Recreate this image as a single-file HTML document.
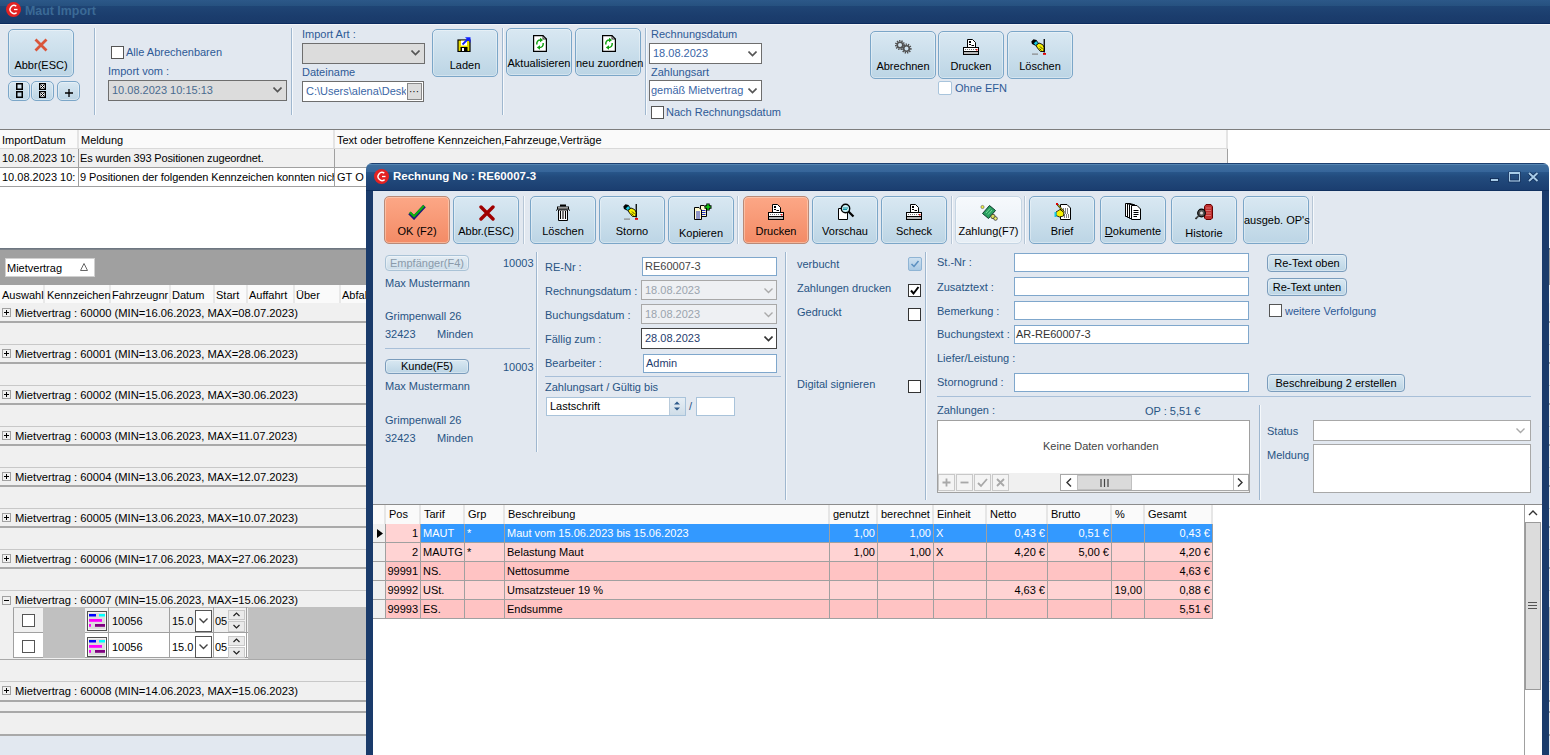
<!DOCTYPE html>
<html><head><meta charset="utf-8">
<style>
*{box-sizing:border-box;margin:0;padding:0}
html,body{width:1550px;height:755px;overflow:hidden;background:#fff}
body{position:relative;font-family:"Liberation Sans",sans-serif;font-size:11px;color:#000}
.a{position:absolute}
.t{position:absolute;white-space:nowrap;line-height:13px}
.tb{background:linear-gradient(#2d5d8f 0%,#24508a 20%,#1b3f72 55%,#17386a 100%)}
.btn{position:absolute;border:1px solid #7ba6c8;border-radius:5px;background:linear-gradient(#d9e8f2,#bcd5e5);text-align:center;box-shadow:inset 0 0 0 1px rgba(255,255,255,0.35)}
.obtn{position:absolute;border:1px solid #b98a78;border-radius:5px;background:linear-gradient(#fca786,#f38b66);text-align:center;box-shadow:inset 0 0 0 1px rgba(255,230,210,0.45)}
.btn span,.obtn span{position:absolute;left:0;right:0;white-space:nowrap}
.lbl{color:#2e5a96}
.dl{color:#285484}
.fld{position:absolute;background:#fff;border:1px solid #7fa7cc}
.cmb{position:absolute;background:#fff;border:1px solid #6e6e6e}
.chk{position:absolute;width:13px;height:13px;border:1px solid #555;background:#fff}
.sep{position:absolute;width:1px;background:#9fb7cf;box-shadow:1px 0 0 #f6f9fc}
.hsep{position:absolute;height:1px;background:#a8bfd8}
</style></head><body>

<!-- MAIN WINDOW -->
<div class="a" style="left:0;top:0;width:1550px;height:24px;background:linear-gradient(#2c5888 0,#26517f 6px,#1f4575 6px,#1b3d6d 16px,#193a6a 23px,#0b2b5e 23px)"></div>
<svg class="a" style="left:6px;top:2px" width="15" height="15" viewBox="0 0 15 15"><circle cx="7.5" cy="7.5" r="7.5" fill="#e42222"/><path d="M10.3 4.2A4 4 0 1 0 10.6 10.6" stroke="#fff" stroke-width="1.4" fill="none"/><path d="M8 7.5H11.5" stroke="#fff" stroke-width="1.3"/></svg>
<div class="t" style="left:25px;top:5px;font-weight:bold;font-size:12.4px;color:#3b6a96">Maut Import</div>

<div class="a" style="left:0;top:24px;width:1550px;height:105px;background:#e2e8f0;border-top:1px solid #f2f5f9"></div>
<div class="a" style="left:0;top:129px;width:1550px;height:1px;background:#7d7d7d"></div>


<!-- toolbar main -->
<div class="btn" style="left:8px;top:29px;width:66px;height:48px">
 <svg class="a" style="left:25px;top:8px" width="14" height="14" viewBox="0 0 14 14"><path d="M1.5 1.5L12.5 12.5M12.5 1.5L1.5 12.5" stroke="#d9553a" stroke-width="2.8"/></svg>
 <span style="top:29px">Abbr(ESC)</span></div>
<div class="btn" style="left:8px;top:81px;width:22px;height:20px;border-radius:5px"><svg class="a" style="left:7px;top:1px" width="8" height="16" viewBox="0 0 8 16"><rect x="0.75" y="0.75" width="5.5" height="5.5" fill="none" stroke="#000" stroke-width="1.5"/><rect x="0.75" y="8.75" width="5.5" height="5.5" fill="none" stroke="#000" stroke-width="1.5"/></svg></div>
<div class="btn" style="left:31px;top:81px;width:23px;height:20px;border-radius:5px"><svg class="a" style="left:7px;top:1px" width="8" height="16" viewBox="0 0 8 16"><rect x="0" y="0" width="7" height="7" fill="#000"/><rect x="1.3" y="1.3" width="4.4" height="4.4" fill="#fff"/><path d="M1.5 1.5L5.5 5.5M5.5 1.5L1.5 5.5" stroke="#000" stroke-width="1"/><rect x="0" y="8" width="7" height="7" fill="#000"/><rect x="1.3" y="9.3" width="4.4" height="4.4" fill="#fff"/><path d="M1.5 9.5L5.5 13.5M5.5 9.5L1.5 13.5" stroke="#000" stroke-width="1"/></svg></div>
<div class="btn" style="left:57px;top:81px;width:23px;height:20px;border-radius:5px"><svg class="a" style="left:7px;top:7px" width="8" height="8"><path d="M4 0V8M0 4H8" stroke="#000" stroke-width="1.3"/></svg></div>
<div class="sep" style="left:94px;top:28px;height:87px"></div>
<div class="chk" style="left:111px;top:46px"></div>
<div class="t lbl" style="left:126px;top:46px">Alle Abrechenbaren</div>
<div class="t lbl" style="left:108px;top:65px">Import vom :</div>
<div class="cmb" style="left:108px;top:80px;width:179px;height:21px;background:#dcdcdc"></div>
<div class="t" style="left:112px;top:84px;color:#4a6b8f">10.08.2023 10:15:13</div>
<svg class="a" style="left:273px;top:87px" width="9" height="6"><path d="M0.5 0.5L4.5 4.5L8.5 0.5" stroke="#555" stroke-width="1.6" fill="none"/></svg>
<div class="sep" style="left:291px;top:28px;height:87px"></div>
<div class="t lbl" style="left:302px;top:28px">Import Art :</div>
<div class="cmb" style="left:302px;top:43px;width:123px;height:21px;background:#dcdcdc"></div>
<svg class="a" style="left:411px;top:50px" width="9" height="6"><path d="M0.5 0.5L4.5 4.5L8.5 0.5" stroke="#555" stroke-width="1.6" fill="none"/></svg>
<div class="t lbl" style="left:302px;top:66px">Dateiname</div>
<div class="cmb" style="left:302px;top:81px;width:122px;height:21px;overflow:hidden"></div>
<div class="t" style="left:306px;top:85px;color:#3a66a6;width:100px;overflow:hidden">C:\Users\alena\Desktop</div>
<div class="a" style="left:407px;top:83px;width:15px;height:17px;background:#dcdcdc;border:1px solid #888"></div>
<div class="t" style="left:409px;top:85px;font-size:10px">···</div>
<div class="btn" style="left:432px;top:29px;width:66px;height:48px">
 <svg class="a" style="left:24px;top:7px" width="15" height="15" viewBox="0 0 15 15"><rect x="1" y="3" width="12" height="11.5" fill="#e6dc00" stroke="#000" stroke-width="1.2"/><rect x="4" y="3.6" width="6" height="5" fill="#fff"/><rect x="3.5" y="10" width="7" height="4.5" fill="#000"/><rect x="5" y="11" width="2" height="3" fill="#fff"/><path d="M5.5 7.5L11 2" stroke="#1020ff" stroke-width="1.8"/><path d="M8 0.3H13.5V5.8Z" fill="#1020ff"/></svg>
 <span style="top:29px">Laden</span></div>
<div class="sep" style="left:502px;top:28px;height:87px"></div>
<div class="btn" style="left:506px;top:28px;width:66px;height:48px">
 <svg class="a" style="left:26px;top:6px" width="14" height="17" viewBox="0 0 14 17"><path d="M0.6 0.6H10L13.4 4V16.4H0.6Z" fill="#fff" stroke="#000" stroke-width="1.2"/><path d="M10 0.6V4H13.4" fill="none" stroke="#000" stroke-width="0.8"/><path d="M3.8 9.5C3.5 6.5 5 5 7.5 5" stroke="#10a010" stroke-width="1.5" fill="none"/><path d="M7 2.8L10.2 5L7 7.2Z" fill="#10a010"/><path d="M10.2 8C10.5 11 9 12.5 6.5 12.5" stroke="#10a010" stroke-width="1.5" fill="none"/><path d="M7 10.3L3.8 12.5L7 14.7Z" fill="#10a010"/></svg>
 <span style="top:28px">Aktualisieren</span></div>
<div class="btn" style="left:575px;top:28px;width:66px;height:48px">
 <svg class="a" style="left:26px;top:6px" width="14" height="17" viewBox="0 0 14 17"><path d="M0.6 0.6H10L13.4 4V16.4H0.6Z" fill="#fff" stroke="#000" stroke-width="1.2"/><path d="M10 0.6V4H13.4" fill="none" stroke="#000" stroke-width="0.8"/><path d="M3.8 9.5C3.5 6.5 5 5 7.5 5" stroke="#10a010" stroke-width="1.5" fill="none"/><path d="M7 2.8L10.2 5L7 7.2Z" fill="#10a010"/><path d="M10.2 8C10.5 11 9 12.5 6.5 12.5" stroke="#10a010" stroke-width="1.5" fill="none"/><path d="M7 10.3L3.8 12.5L7 14.7Z" fill="#10a010"/></svg>
 <span style="top:28px">neu zuordnen</span></div>
<div class="sep" style="left:645px;top:28px;height:87px"></div>
<div class="t lbl" style="left:651px;top:28px">Rechnungsdatum</div>
<div class="cmb" style="left:649px;top:43px;width:113px;height:21px"></div>
<div class="t" style="left:653px;top:47px;color:#3a66a6">18.08.2023</div>
<svg class="a" style="left:748px;top:51px" width="9" height="6"><path d="M0.5 0.5L4.5 4.5L8.5 0.5" stroke="#555" stroke-width="1.6" fill="none"/></svg>
<div class="t lbl" style="left:651px;top:66px">Zahlungsart</div>
<div class="cmb" style="left:649px;top:80px;width:113px;height:21px"></div>
<div class="t" style="left:651px;top:84px;color:#3a66a6">gemäß Mietvertrag</div>
<svg class="a" style="left:748px;top:88px" width="9" height="6"><path d="M0.5 0.5L4.5 4.5L8.5 0.5" stroke="#555" stroke-width="1.6" fill="none"/></svg>
<div class="chk" style="left:651px;top:106px"></div>
<div class="t lbl" style="left:666px;top:106px">Nach Rechnungsdatum</div>

<div class="btn" style="left:870px;top:31px;width:66px;height:48px">
 <svg class="a" style="left:24px;top:8px" width="17" height="14" viewBox="0 0 17 14"><circle cx="5" cy="5" r="4.2" fill="none" stroke="#505050" stroke-width="1.8" stroke-dasharray="1.3 1"/><circle cx="5" cy="5" r="2.8" fill="none" stroke="#505050" stroke-width="1.6"/><circle cx="11.5" cy="8.5" r="4.2" fill="none" stroke="#505050" stroke-width="1.8" stroke-dasharray="1.3 1"/><circle cx="11.5" cy="8.5" r="2.8" fill="none" stroke="#505050" stroke-width="1.6"/></svg>
 <span style="top:28px">Abrechnen</span></div>
<div class="btn" style="left:938px;top:31px;width:66px;height:48px">
 <svg class="a" style="left:24px;top:7px" width="17" height="16" viewBox="0 0 17 16"><path d="M4.5 0.5H9.5L12.5 3.5V8.5H4.5Z" fill="#fff" stroke="#000"/><rect x="6" y="2" width="2" height="2" fill="#000"/><path d="M6 5.5H8M8.5 6.5H11" stroke="#000"/><rect x="0.5" y="8.5" width="15" height="4" fill="#fff" stroke="#000"/><path d="M2 10.5H13" stroke="#777" stroke-dasharray="1 1"/><rect x="13" y="10" width="1.5" height="1.5" fill="#e00"/><rect x="0.5" y="12.5" width="15" height="3" fill="#b8b8b8" stroke="#000"/></svg>
 <span style="top:28px">Drucken</span></div>
<div class="btn" style="left:1007px;top:31px;width:66px;height:48px">
 <svg class="a" style="left:23px;top:7px" width="18" height="16" viewBox="0 0 18 16"><path d="M0.3 2.5L2.5 0.3L5.5 1L7 3.5L4 6.5L1 5Z" fill="#000"/><path d="M2.5 4.3L5.2 1.8L7.5 4.2L4.8 6.8Z" fill="#18c8e0" stroke="#000" stroke-width="0.6"/><path d="M5 6.5L8 4L11.5 5.5L13.5 8.5L13 12.5L9.5 12.5L6.5 9Z" fill="#f6f000" stroke="#000" stroke-width="0.9"/><path d="M9 7.5L11.5 10M8.5 9.5L10.5 11.5" stroke="#000" stroke-width="0.7"/><rect x="12.6" y="0" width="1.3" height="13.5" fill="#000"/><rect x="1" y="14.5" width="6" height="1.2" fill="#888"/><rect x="12" y="14" width="3" height="1.8" fill="#e00000"/></svg>
 <span style="top:28px">Löschen</span></div>
<div class="chk" style="left:938px;top:81px;width:14px;height:14px;border-color:#a8c4dc;border-radius:2px"></div>
<div class="t lbl" style="left:955px;top:82px">Ohne EFN</div>


<!-- top grid -->
<div class="a" style="left:0;top:130px;width:1228px;height:19px;background:#fafafa;border-bottom:1px solid #d9d9d9"></div>
<div class="a" style="left:0;top:149px;width:1228px;height:19px;background:#f0f0f0;border-bottom:1px solid #a0a0a0"></div>
<div class="a" style="left:0;top:168px;width:1228px;height:19px;background:#fff;border-bottom:1px solid #a0a0a0"></div>
<div class="a" style="left:77px;top:130px;width:2px;height:18px;background:#e4e4e4"></div><div class="a" style="left:78px;top:149px;width:1px;height:38px;background:#a0a0a0"></div>
<div class="a" style="left:333px;top:130px;width:2px;height:18px;background:#e4e4e4"></div><div class="a" style="left:334px;top:149px;width:1px;height:38px;background:#a0a0a0"></div>
<div class="a" style="left:1226px;top:130px;width:2px;height:18px;background:#e4e4e4"></div><div class="a" style="left:1227px;top:149px;width:1px;height:38px;background:#a0a0a0"></div>
<div class="t" style="left:2px;top:134px">ImportDatum</div>
<div class="t" style="left:81px;top:134px">Meldung</div>
<div class="t" style="left:337px;top:134px">Text oder betroffene Kennzeichen,Fahrzeuge,Verträge</div>
<div class="t" style="left:2px;top:152px">10.08.2023 10:</div>
<div class="t" style="left:80px;top:152px;letter-spacing:-0.15px">Es wurden 393 Positionen zugeordnet.</div>
<div class="t" style="left:2px;top:171px">10.08.2023 10:</div>
<div class="t" style="left:80px;top:171px;width:254px;overflow:hidden;letter-spacing:-0.1px">9 Positionen der folgenden Kennzeichen konnten nicht</div>
<div class="t" style="left:337px;top:171px">GT O 6</div>

<!-- group panel -->
<div class="a" style="left:0;top:248px;width:1550px;height:2px;background:linear-gradient(#66707c,#858a90)"></div>
<div class="a" style="left:0;top:250px;width:1550px;height:35px;background:#a0a0a0"></div>
<div class="a" style="left:5px;top:258px;width:90px;height:19px;background:#fff;border:1px solid #d0d0d0"></div>
<div class="t" style="left:7px;top:262px">Mietvertrag</div>
<svg class="a" style="left:80px;top:263px" width="8" height="8"><path d="M4 0.5L7.5 7.5H0.5Z" fill="none" stroke="#666"/></svg>
<div class="a" style="left:0;top:285px;width:1550px;height:470px;background:#f0f0f0"></div>
<div class="a" style="left:0;top:285px;width:1550px;height:18px;background:#fafafa"></div>
<div class="a" style="left:43px;top:285px;width:2px;height:18px;background:#e8e8e8"></div><div class="t" style="left:2px;top:289px">Auswahl</div>
<div class="a" style="left:109px;top:285px;width:2px;height:18px;background:#e8e8e8"></div><div class="t" style="left:47px;top:289px">Kennzeichen</div>
<div class="a" style="left:169px;top:285px;width:2px;height:18px;background:#e8e8e8"></div><div class="t" style="left:112px;top:289px">Fahrzeugnr</div>
<div class="a" style="left:213px;top:285px;width:2px;height:18px;background:#e8e8e8"></div><div class="t" style="left:172px;top:289px">Datum</div>
<div class="a" style="left:246px;top:285px;width:2px;height:18px;background:#e8e8e8"></div><div class="t" style="left:216px;top:289px">Start</div>
<div class="a" style="left:293px;top:285px;width:2px;height:18px;background:#e8e8e8"></div><div class="t" style="left:249px;top:289px">Auffahrt</div>
<div class="a" style="left:339px;top:285px;width:2px;height:18px;background:#e8e8e8"></div><div class="t" style="left:296px;top:289px">Über</div>
<div class="a" style="left:400px;top:285px;width:2px;height:18px;background:#e8e8e8"></div><div class="t" style="left:342px;top:289px">Abfahrt</div>
<div class="a" style="left:0;top:321px;width:1550px;height:2px;background:#a9a9a9"></div><div class="a" style="left:0;top:344px;width:1550px;height:1px;background:#c8c8c8"></div><div class="a" style="left:2px;top:308px;width:9px;height:9px;border:1px solid #a0a0a0;background:#f0f0f0"></div><div class="a" style="left:4px;top:312px;width:5px;height:1px;background:#000"></div><div class="a" style="left:6px;top:310px;width:1px;height:5px;background:#000"></div><div class="t" style="left:15px;top:307px;font-size:11.2px">Mietvertrag : 60000 (MIN=16.06.2023, MAX=08.07.2023)</div>
<div class="a" style="left:0;top:362px;width:1550px;height:2px;background:#a9a9a9"></div><div class="a" style="left:0;top:385px;width:1550px;height:1px;background:#c8c8c8"></div><div class="a" style="left:2px;top:349px;width:9px;height:9px;border:1px solid #a0a0a0;background:#f0f0f0"></div><div class="a" style="left:4px;top:353px;width:5px;height:1px;background:#000"></div><div class="a" style="left:6px;top:351px;width:1px;height:5px;background:#000"></div><div class="t" style="left:15px;top:348px;font-size:11.2px">Mietvertrag : 60001 (MIN=13.06.2023, MAX=28.06.2023)</div>
<div class="a" style="left:0;top:403px;width:1550px;height:2px;background:#a9a9a9"></div><div class="a" style="left:0;top:426px;width:1550px;height:1px;background:#c8c8c8"></div><div class="a" style="left:2px;top:390px;width:9px;height:9px;border:1px solid #a0a0a0;background:#f0f0f0"></div><div class="a" style="left:4px;top:394px;width:5px;height:1px;background:#000"></div><div class="a" style="left:6px;top:392px;width:1px;height:5px;background:#000"></div><div class="t" style="left:15px;top:389px;font-size:11.2px">Mietvertrag : 60002 (MIN=15.06.2023, MAX=30.06.2023)</div>
<div class="a" style="left:0;top:444px;width:1550px;height:2px;background:#a9a9a9"></div><div class="a" style="left:0;top:467px;width:1550px;height:1px;background:#c8c8c8"></div><div class="a" style="left:2px;top:431px;width:9px;height:9px;border:1px solid #a0a0a0;background:#f0f0f0"></div><div class="a" style="left:4px;top:435px;width:5px;height:1px;background:#000"></div><div class="a" style="left:6px;top:433px;width:1px;height:5px;background:#000"></div><div class="t" style="left:15px;top:430px;font-size:11.2px">Mietvertrag : 60003 (MIN=13.06.2023, MAX=11.07.2023)</div>
<div class="a" style="left:0;top:485px;width:1550px;height:2px;background:#a9a9a9"></div><div class="a" style="left:0;top:508px;width:1550px;height:1px;background:#c8c8c8"></div><div class="a" style="left:2px;top:472px;width:9px;height:9px;border:1px solid #a0a0a0;background:#f0f0f0"></div><div class="a" style="left:4px;top:476px;width:5px;height:1px;background:#000"></div><div class="a" style="left:6px;top:474px;width:1px;height:5px;background:#000"></div><div class="t" style="left:15px;top:471px;font-size:11.2px">Mietvertrag : 60004 (MIN=13.06.2023, MAX=12.07.2023)</div>
<div class="a" style="left:0;top:526px;width:1550px;height:2px;background:#a9a9a9"></div><div class="a" style="left:0;top:549px;width:1550px;height:1px;background:#c8c8c8"></div><div class="a" style="left:2px;top:513px;width:9px;height:9px;border:1px solid #a0a0a0;background:#f0f0f0"></div><div class="a" style="left:4px;top:517px;width:5px;height:1px;background:#000"></div><div class="a" style="left:6px;top:515px;width:1px;height:5px;background:#000"></div><div class="t" style="left:15px;top:512px;font-size:11.2px">Mietvertrag : 60005 (MIN=13.06.2023, MAX=10.07.2023)</div>
<div class="a" style="left:0;top:567px;width:1550px;height:2px;background:#a9a9a9"></div><div class="a" style="left:0;top:590px;width:1550px;height:1px;background:#c8c8c8"></div><div class="a" style="left:2px;top:554px;width:9px;height:9px;border:1px solid #a0a0a0;background:#f0f0f0"></div><div class="a" style="left:4px;top:558px;width:5px;height:1px;background:#000"></div><div class="a" style="left:6px;top:556px;width:1px;height:5px;background:#000"></div><div class="t" style="left:15px;top:553px;font-size:11.2px">Mietvertrag : 60006 (MIN=17.06.2023, MAX=27.06.2023)</div>

<div class="a" style="left:0;top:591px;width:1550px;height:16px"></div>
<div class="a" style="left:2px;top:596px;width:9px;height:9px;border:1px solid #a0a0a0;background:#f0f0f0"></div><div class="a" style="left:4px;top:600px;width:5px;height:1px;background:#000"></div>
<div class="t" style="left:15px;top:594px;font-size:11.2px">Mietvertrag : 60007 (MIN=15.06.2023, MAX=15.06.2023)</div>
<div class="a" style="left:248px;top:607px;width:1302px;height:52px;background:#c0c0c0"></div>
<div class="a" style="left:13px;top:607px;width:1px;height:51px;background:#a0a0a0"></div>
<div class="a" style="left:13px;top:607px;width:235px;height:1px;background:#b8b8b8"></div>

<div class="a" style="left:14px;top:608px;width:234px;height:25px;background:#f0f0f0;border-bottom:1px solid #a0a0a0"></div>
<div class="chk" style="left:22px;top:614px;width:13px;height:13px;border-color:#555"></div>
<div class="a" style="left:43px;top:607px;width:42px;height:26px;background:#c0c0c0"></div>
<div class="a" style="left:108px;top:607px;width:1px;height:26px;background:#a0a0a0"></div>
<div class="a" style="left:169px;top:607px;width:1px;height:26px;background:#a0a0a0"></div>
<div class="a" style="left:213px;top:607px;width:1px;height:26px;background:#a0a0a0"></div>
<div class="a" style="left:246px;top:607px;width:1px;height:26px;background:#a0a0a0"></div>
<svg class="a" style="left:87px;top:611px" width="20" height="20" viewBox="0 0 20 20"><rect x="0.5" y="0.5" width="19" height="19" fill="#dcdcdc" stroke="#505050"/><rect x="1.5" y="1.5" width="17" height="17" fill="none" stroke="#f4f4f4"/><rect x="2" y="3" width="7" height="2.5" fill="#0000ff"/><rect x="12" y="3" width="6" height="2.5" fill="#00ffff"/><rect x="2" y="8" width="13" height="2.8" fill="#ff00ff"/><rect x="2" y="13" width="2" height="2.8" fill="#ff00ff"/><rect x="8" y="13" width="10" height="2.8" fill="#800080"/></svg>
<div class="t" style="left:112px;top:615px">10056</div>
<div class="t" style="left:172px;top:615px">15.0</div>
<div class="a" style="left:195px;top:610px;width:17px;height:22px;background:#fff;border:1px solid #555"></div>
<svg class="a" style="left:199px;top:618px" width="9" height="6"><path d="M0.5 0.5L4.5 4.5L8.5 0.5" stroke="#444" stroke-width="1.4" fill="none"/></svg>
<div class="t" style="left:215px;top:615px">05</div>
<div class="a" style="left:228px;top:610px;width:17px;height:10px;background:#eaeaea;border:1px solid #c8c8c8"></div>
<div class="a" style="left:228px;top:621px;width:17px;height:11px;background:#eaeaea;border:1px solid #c8c8c8"></div>
<svg class="a" style="left:233px;top:612px" width="7" height="5"><path d="M0.5 4L3.5 1L6.5 4" stroke="#222" stroke-width="1.2" fill="none"/></svg>
<svg class="a" style="left:233px;top:624px" width="7" height="5"><path d="M0.5 1L3.5 4L6.5 1" stroke="#222" stroke-width="1.2" fill="none"/></svg>

<div class="a" style="left:14px;top:633px;width:234px;height:25px;background:#fff;border-bottom:1px solid #a0a0a0"></div>
<div class="chk" style="left:22px;top:640px;width:13px;height:13px;border-color:#555"></div>
<div class="a" style="left:43px;top:633px;width:42px;height:25px;background:#c0c0c0"></div>
<div class="a" style="left:108px;top:633px;width:1px;height:25px;background:#a0a0a0"></div>
<div class="a" style="left:169px;top:633px;width:1px;height:25px;background:#a0a0a0"></div>
<div class="a" style="left:213px;top:633px;width:1px;height:25px;background:#a0a0a0"></div>
<div class="a" style="left:246px;top:633px;width:1px;height:25px;background:#a0a0a0"></div>
<svg class="a" style="left:87px;top:637px" width="20" height="20" viewBox="0 0 20 20"><rect x="0.5" y="0.5" width="19" height="19" fill="#dcdcdc" stroke="#505050"/><rect x="1.5" y="1.5" width="17" height="17" fill="none" stroke="#f4f4f4"/><rect x="2" y="3" width="7" height="2.5" fill="#0000ff"/><rect x="12" y="3" width="6" height="2.5" fill="#00ffff"/><rect x="2" y="8" width="13" height="2.8" fill="#ff00ff"/><rect x="2" y="13" width="2" height="2.8" fill="#ff00ff"/><rect x="8" y="13" width="10" height="2.8" fill="#800080"/></svg>
<div class="t" style="left:112px;top:641px">10056</div>
<div class="t" style="left:172px;top:641px">15.0</div>
<div class="a" style="left:195px;top:636px;width:17px;height:22px;background:#fff;border:1px solid #555"></div>
<svg class="a" style="left:199px;top:644px" width="9" height="6"><path d="M0.5 0.5L4.5 4.5L8.5 0.5" stroke="#444" stroke-width="1.4" fill="none"/></svg>
<div class="t" style="left:215px;top:641px">05</div>
<div class="a" style="left:228px;top:636px;width:17px;height:10px;background:#eaeaea;border:1px solid #c8c8c8"></div>
<div class="a" style="left:228px;top:647px;width:17px;height:11px;background:#eaeaea;border:1px solid #c8c8c8"></div>
<svg class="a" style="left:233px;top:638px" width="7" height="5"><path d="M0.5 4L3.5 1L6.5 4" stroke="#222" stroke-width="1.2" fill="none"/></svg>
<svg class="a" style="left:233px;top:650px" width="7" height="5"><path d="M0.5 1L3.5 4L6.5 1" stroke="#222" stroke-width="1.2" fill="none"/></svg>
<div class="a" style="left:0;top:659px;width:1550px;height:1px;background:#a9a9a9"></div>
<div class="a" style="left:0;top:681px;width:1550px;height:1px;background:#c8c8c8"></div>
<div class="a" style="left:2px;top:686px;width:9px;height:9px;border:1px solid #a0a0a0;background:#f0f0f0"></div><div class="a" style="left:4px;top:690px;width:5px;height:1px;background:#000"></div><div class="a" style="left:6px;top:688px;width:1px;height:5px;background:#000"></div>
<div class="t" style="left:15px;top:685px;font-size:11.2px">Mietvertrag : 60008 (MIN=14.06.2023, MAX=15.06.2023)</div>
<div class="a" style="left:0;top:700px;width:1550px;height:2px;background:#a9a9a9"></div>
<div class="a" style="left:0;top:711px;width:1550px;height:2px;background:#a9a9a9"></div>
<div class="a" style="left:0;top:734px;width:1550px;height:2px;background:#a9a9a9"></div>
<div class="a" style="left:0;top:736px;width:1550px;height:19px;background:#e2e8f0"></div>


<!-- DIALOG -->
<div class="a tb" style="left:366px;top:163px;width:1183px;height:592px;border-radius:6px 6px 0 0;background:linear-gradient(#1d4070 0,#1d4070 1px,#5b8bb8 1px,#4f7fad 2px,#3d6c9c 2px,#36659a 9px,#28568a 9px,#224b7d 14px,#1b3e70 27px,#10305f 27px,#10305f 28px,#1a3b6b 28px)"></div>
<div class="a" style="left:373px;top:191px;width:1169px;height:564px;background:#e2e8f0"></div>
<svg class="a" style="left:374px;top:169px" width="15" height="15" viewBox="0 0 15 15"><circle cx="7.5" cy="7.5" r="7.5" fill="#e42222"/><path d="M10.3 4.2A4 4 0 1 0 10.6 10.6" stroke="#fff" stroke-width="1.4" fill="none"/><path d="M8 7.5H11.5" stroke="#fff" stroke-width="1.3"/></svg>
<div class="t" style="left:393px;top:170px;color:#fff;font-weight:bold;font-size:11.5px">Rechnung No : RE60007-3</div>
<svg class="a" style="left:1488px;top:168px" width="54" height="16" viewBox="0 0 54 16"><rect x="2.5" y="10.5" width="8" height="3" fill="#a8cce8" stroke="#0e2a55" stroke-width="0.9"/><rect x="21.5" y="5" width="10" height="8" fill="none" stroke="#0e2a55" stroke-width="2.6"/><rect x="21.5" y="5" width="10" height="8" fill="none" stroke="#a8cce8" stroke-width="1.2"/><rect x="21" y="4" width="11" height="2" fill="#a8cce8"/><path d="M41 5L49.5 13M49.5 5L41 13" stroke="#0e2a55" stroke-width="3.4"/><path d="M41 5L49.5 13M49.5 5L41 13" stroke="#a8cce8" stroke-width="2"/></svg>
<div class="obtn" style="left:384px;top:196px;width:66px;height:48px"><svg class="a" style="left:23px;top:7px" width="18" height="16" viewBox="0 0 18 16"><path d="M1.5 9L6 13.5L16.5 2" stroke="#1b1b7a" stroke-width="3.6" fill="none"/><path d="M1.8 8.3L6 12.3L16 1.8" stroke="#0cb00c" stroke-width="2.2" fill="none"/></svg><span style="top:28px">OK (F2)</span></div>
<div class="btn" style="left:453px;top:196px;width:66px;height:48px"><svg class="a" style="left:25px;top:8px" width="16" height="16" viewBox="0 0 16 16"><path d="M2 2L14 14M14 2L2 14" stroke="#a00000" stroke-width="3.4" stroke-linecap="round"/></svg><span style="top:28px">Abbr.(ESC)</span></div>
<div class="sep" style="left:523px;top:196px;height:48px;background:#b7c6d6"></div><div class="btn" style="left:530px;top:196px;width:66px;height:48px"><svg class="a" style="left:25px;top:7px" width="14" height="17" viewBox="0 0 14 17"><rect x="4" y="0.5" width="6" height="2" fill="#000"/><rect x="1" y="2.5" width="12" height="3" fill="#000"/><rect x="2" y="3.3" width="10" height="1.2" fill="#ddd"/><path d="M2.5 6H11.5V16.5H2.5Z" fill="#fff" stroke="#000"/><path d="M4.5 7V15M7 7V15M9.5 7V15" stroke="#000" stroke-width="1.1"/><path d="M0 6.5L1.5 5.5M14 6.5L12.5 5.5" stroke="#000"/></svg><span style="top:28px">Löschen</span></div>
<div class="btn" style="left:599px;top:196px;width:66px;height:48px"><svg class="a" style="left:23px;top:7px" width="18" height="16" viewBox="0 0 18 16"><path d="M0.3 2.5L2.5 0.3L5.5 1L7 3.5L4 6.5L1 5Z" fill="#000"/><path d="M2.5 4.3L5.2 1.8L7.5 4.2L4.8 6.8Z" fill="#18c8e0" stroke="#000" stroke-width="0.6"/><path d="M5 6.5L8 4L11.5 5.5L13.5 8.5L13 12.5L9.5 12.5L6.5 9Z" fill="#f6f000" stroke="#000" stroke-width="0.9"/><path d="M9 7.5L11.5 10M8.5 9.5L10.5 11.5" stroke="#000" stroke-width="0.7"/><rect x="12.6" y="0" width="1.3" height="13.5" fill="#000"/><rect x="1" y="14.5" width="6" height="1.2" fill="#888"/><rect x="12" y="14" width="3" height="1.8" fill="#e00000"/></svg><span style="top:28px">Storno</span></div>
<div class="btn" style="left:668px;top:196px;width:66px;height:48px"><svg class="a" style="left:24px;top:6px" width="19" height="17" viewBox="0 0 19 17"><path d="M7.5 2.5H11L13.5 5V13.5H7.5Z" fill="#fffbd0" stroke="#000"/><path d="M1.5 4.5H6L8.5 7V16.5H1.5Z" fill="#fffbd0" stroke="#000"/><path d="M3 9H7M3 11H7M3 13H7M3 15H7M9 7.5H12.5M9 9.5H12.5M9 11.5H12.5" stroke="#2030c0"/><path d="M15 0.5V7.5M11.5 4H18.5" stroke="#000" stroke-width="3.4"/><path d="M15 1.3V6.7M12.3 4H17.7" stroke="#10d010" stroke-width="1.6"/></svg><span style="top:30px">Kopieren</span></div>
<div class="sep" style="left:737px;top:196px;height:48px;background:#b7c6d6"></div><div class="obtn" style="left:743px;top:196px;width:66px;height:48px"><svg class="a" style="left:24px;top:7px" width="17" height="16" viewBox="0 0 17 16"><path d="M4.5 0.5H9.5L12.5 3.5V8.5H4.5Z" fill="#fff" stroke="#000"/><rect x="6" y="2" width="2" height="2" fill="#000"/><path d="M6 5.5H8M8.5 6.5H11" stroke="#000"/><rect x="0.5" y="8.5" width="15" height="4" fill="#fff" stroke="#000"/><path d="M2 10.5H13" stroke="#777" stroke-dasharray="1 1"/><rect x="13" y="10" width="1.5" height="1.5" fill="#e00"/><rect x="0.5" y="12.5" width="15" height="3" fill="#b8b8b8" stroke="#000"/></svg><span style="top:28px">Drucken</span></div>
<div class="btn" style="left:812px;top:196px;width:66px;height:48px"><svg class="a" style="left:25px;top:6px" width="17" height="17" viewBox="0 0 17 17"><path d="M0.5 5.5H7.5L9.5 7.5V16.5H0.5Z" fill="#fff" stroke="#000"/><circle cx="7.5" cy="5.5" r="4.2" fill="#c8eef4" stroke="#000" stroke-width="1.4"/><path d="M5 5H10M5 6.5H9" stroke="#1090a0"/><path d="M10.5 8.5L15.5 13.5" stroke="#000" stroke-width="2.2"/></svg><span style="top:28px">Vorschau</span></div>
<div class="btn" style="left:881px;top:196px;width:66px;height:48px"><svg class="a" style="left:24px;top:7px" width="17" height="16" viewBox="0 0 17 16"><path d="M4.5 0.5H9.5L12.5 3.5V8.5H4.5Z" fill="#fff" stroke="#000"/><rect x="6" y="2" width="2" height="2" fill="#000"/><path d="M6 5.5H8M8.5 6.5H11" stroke="#000"/><rect x="0.5" y="8.5" width="15" height="4" fill="#fff" stroke="#000"/><path d="M2 10.5H13" stroke="#777" stroke-dasharray="1 1"/><rect x="13" y="10" width="1.5" height="1.5" fill="#e00"/><rect x="0.5" y="12.5" width="15" height="3" fill="#b8b8b8" stroke="#000"/></svg><span style="top:28px">Scheck</span></div>
<div class="sep" style="left:951px;top:196px;height:48px;background:#b7c6d6"></div><div class="btn" style="left:955px;top:196px;width:67px;height:48px;background:linear-gradient(#f6f9fc,#e6eef5);border-color:#c6d6e4"><svg class="a" style="left:24px;top:7px" width="18" height="17" viewBox="0 0 18 17"><path d="M2.5 9.5L9.5 1.5L15.5 6.5L8.5 14.5Z" fill="#2aa060" stroke="#0b3a2a" stroke-width="1"/><path d="M6 9L10 4.5M8 10.5L12 6" stroke="#7fe0a0" stroke-width="0.9"/><circle cx="13" cy="12.5" r="2.2" fill="#d8e060" stroke="#333" stroke-width="0.8"/><circle cx="15.5" cy="14.5" r="1.8" fill="#f0f070" stroke="#333" stroke-width="0.8"/><circle cx="2.5" cy="3" r="1.6" fill="#f0f040" stroke="#555" stroke-width="0.6"/></svg><span style="top:28px">Zahlung(F7)</span></div><div class="sep" style="left:1024px;top:196px;height:48px;background:#b7c6d6"></div><div class="btn" style="left:1029px;top:196px;width:66px;height:48px"><svg class="a" style="left:24px;top:6px" width="18" height="17" viewBox="0 0 18 17"><path d="M6.5 1.5H13L16.5 5V16.5H6.5Z" fill="#fff" stroke="#000"/><path d="M9 6H15M9 8H15M9 10H15M10 12H15M10 14H15" stroke="#000" stroke-dasharray="1 1"/><path d="M2 9L6 6.5L10 9L9.5 13L5.5 14L2 12.5Z" fill="#f6f000" stroke="#000" stroke-width="0.8"/><rect x="0.5" y="9" width="2" height="5" fill="#18c8e0"/><path d="M3 1L10 9" stroke="#000" stroke-width="1.8"/><path d="M3.3 1.3L9.7 8.7" stroke="#f0e000" stroke-width="0.9"/><rect x="2" y="0" width="2" height="2" fill="#d00"/></svg><span style="top:28px">Brief</span></div>
<div class="btn" style="left:1100px;top:196px;width:66px;height:48px"><svg class="a" style="left:24px;top:6px" width="18" height="17" viewBox="0 0 18 17"><path d="M0.5 0.5H5.5V13.5H0.5Z" fill="#fff" stroke="#000"/><path d="M2.5 1H7.5V14.5H2.5Z" fill="#fff" stroke="#000"/><path d="M4.5 1.5H9.5V15.5H4.5Z" fill="#fff" stroke="#000"/><path d="M6.5 2.5H12L15.5 6V16.5H6.5Z" fill="#fff" stroke="#000"/><path d="M8.5 7.5H13.5M8.5 9.5H13.5M8.5 11.5H13.5M8.5 13.5H12" stroke="#000"/></svg><span style="top:28px"><u>D</u>okumente</span></div>
<div class="btn" style="left:1171px;top:196px;width:66px;height:48px"><svg class="a" style="left:23px;top:6px" width="19" height="17" viewBox="0 0 19 17"><path d="M9.5 3.5L11 1.5H16L17.5 3.5V15L16 16.5H11L9.5 15Z" fill="#c03030" stroke="#600" stroke-width="1"/><path d="M11.5 5H16M11.5 7.5H16M11.5 10H16M11.5 12.5H16" stroke="#f0b0b0" stroke-dasharray="1 1"/><circle cx="6.5" cy="10" r="3.8" fill="#555" stroke="#000" stroke-width="1.2"/><circle cx="6.5" cy="10" r="1.5" fill="#ddd"/><path d="M4.5 12L0.5 16" stroke="#000" stroke-width="1.6"/><path d="M4.2 12.3L1 15.5" stroke="#fff" stroke-width="0.5"/></svg><span style="top:30px">Historie</span></div>
<div class="btn" style="left:1243px;top:196px;width:66px;height:48px"><span style="top:17px">ausgeb. OP's</span></div><div class="sep" style="left:1312px;top:196px;height:48px;background:#b7c6d6"></div>

<!-- dialog body left -->
<div class="btn" style="left:385px;top:255px;width:84px;height:16px;border-radius:4px;background:linear-gradient(#e4edf4,#cddde9);border-color:#a9c2d6"><span style="top:1px;color:#8a9aaa">Empfänger(F4)</span></div>
<div class="t dl" style="left:503px;top:257px">10003</div>
<div class="t dl" style="left:385px;top:277px">Max Mustermann</div>
<div class="t dl" style="left:385px;top:310px">Grimpenwall 26</div>
<div class="t dl" style="left:385px;top:328px">32423</div>
<div class="t dl" style="left:437px;top:328px">Minden</div>
<div class="hsep" style="left:385px;top:348px;width:145px"></div>
<div class="btn" style="left:385px;top:359px;width:84px;height:15px;border-radius:4px;border-color:#7a9cbc"><span style="top:0px">Kunde(F5)</span></div>
<div class="t dl" style="left:503px;top:361px">10003</div>
<div class="t dl" style="left:385px;top:380px">Max Mustermann</div>
<div class="t dl" style="left:385px;top:414px">Grimpenwall 26</div>
<div class="t dl" style="left:385px;top:432px">32423</div>
<div class="t dl" style="left:437px;top:432px">Minden</div>
<div class="sep" style="left:536px;top:252px;height:200px"></div>

<!-- middle fields -->
<div class="t dl" style="left:545px;top:261px">RE-Nr :</div>
<div class="fld" style="left:642px;top:257px;width:135px;height:19px"></div>
<div class="t" style="left:645px;top:260px;color:#444">RE60007-3</div>
<div class="t dl" style="left:545px;top:285px">Rechnungsdatum :</div>
<div class="fld" style="left:641px;top:280px;width:136px;height:20px;border-color:#a8a8a8;background:#eef0f3"></div>
<div class="t" style="left:645px;top:284px;color:#9aa4ae">18.08.2023</div>
<svg class="a" style="left:764px;top:288px" width="9" height="6"><path d="M0.5 0.5L4.5 4.5L8.5 0.5" stroke="#aaa" stroke-width="1.4" fill="none"/></svg>
<div class="t dl" style="left:545px;top:309px">Buchungsdatum :</div>
<div class="fld" style="left:641px;top:304px;width:136px;height:20px;border-color:#a8a8a8;background:#eef0f3"></div>
<div class="t" style="left:645px;top:308px;color:#9aa4ae">18.08.2023</div>
<svg class="a" style="left:764px;top:312px" width="9" height="6"><path d="M0.5 0.5L4.5 4.5L8.5 0.5" stroke="#aaa" stroke-width="1.4" fill="none"/></svg>
<div class="t dl" style="left:545px;top:333px">Fällig zum :</div>
<div class="fld" style="left:641px;top:328px;width:136px;height:21px;border-color:#444;background:#fff"></div>
<div class="t" style="left:645px;top:332px;color:#1f3d6e">28.08.2023</div>
<svg class="a" style="left:764px;top:336px" width="9" height="6"><path d="M0.5 0.5L4.5 4.5L8.5 0.5" stroke="#333" stroke-width="1.6" fill="none"/></svg>
<div class="t dl" style="left:545px;top:357px">Bearbeiter :</div>
<div class="fld" style="left:643px;top:354px;width:134px;height:19px"></div>
<div class="t" style="left:646px;top:357px;color:#1f3d6e">Admin</div>
<div class="hsep" style="left:545px;top:376px;width:236px"></div>
<div class="t dl" style="left:545px;top:381px">Zahlungsart / Gültig bis</div>
<div class="fld" style="left:546px;top:397px;width:140px;height:19px;border-color:#a9c3da"></div>
<div class="t" style="left:550px;top:400px">Lastschrift</div>
<div class="a" style="left:669px;top:398px;width:16px;height:17px;background:linear-gradient(#e6eef5,#cfdde8);border-left:1px solid #b9cbdb"></div>
<svg class="a" style="left:673px;top:400px" width="8" height="12"><path d="M1 4.5L4 1.5L7 4.5Z M1 7.5L4 10.5L7 7.5Z" fill="#2e5a8a"/></svg>
<div class="t dl" style="left:689px;top:400px">/</div>
<div class="fld" style="left:696px;top:397px;width:39px;height:19px;border-color:#a9c3da"></div>
<div class="sep" style="left:785px;top:252px;height:248px"></div>

<!-- checkboxes -->
<div class="t dl" style="left:797px;top:258px">verbucht</div>
<div class="a" style="left:908px;top:257px;width:14px;height:14px;border:1px solid #8fb4d4;border-radius:2px;background:linear-gradient(#cde0f0,#a9c9e4)"></div>
<svg class="a" style="left:910px;top:259px" width="10" height="10"><path d="M1.5 5L4 7.5L8.5 2" stroke="#5a8fc0" stroke-width="1.5" fill="none"/></svg>
<div class="t dl" style="left:797px;top:282px">Zahlungen drucken</div>
<div class="chk" style="left:908px;top:284px;width:13px;height:13px;border-color:#333"></div>
<svg class="a" style="left:909px;top:285px" width="11" height="11"><path d="M2 5.5L4.5 8.5L9.5 2" stroke="#000" stroke-width="2" fill="none"/></svg>
<div class="t dl" style="left:797px;top:306px">Gedruckt</div>
<div class="chk" style="left:908px;top:308px;width:13px;height:13px;border-color:#333"></div>
<div class="t dl" style="left:797px;top:378px">Digital signieren</div>
<div class="chk" style="left:908px;top:380px;width:13px;height:13px;border-color:#333"></div>
<div class="sep" style="left:925px;top:252px;height:248px"></div>

<!-- right fields -->
<div class="t dl" style="left:937px;top:256px">St.-Nr :</div>
<div class="fld" style="left:1014px;top:253px;width:235px;height:19px"></div>
<div class="t dl" style="left:937px;top:281px">Zusatztext :</div>
<div class="fld" style="left:1014px;top:277px;width:235px;height:19px"></div>
<div class="t dl" style="left:937px;top:305px">Bemerkung :</div>
<div class="fld" style="left:1014px;top:301px;width:235px;height:19px"></div>
<div class="t dl" style="left:937px;top:328px">Buchungstext :</div>
<div class="fld" style="left:1014px;top:325px;width:235px;height:19px"></div>
<div class="t" style="left:1016px;top:328px;color:#333">AR-RE60007-3</div>
<div class="t dl" style="left:937px;top:352px">Liefer/Leistung :</div>
<div class="t dl" style="left:937px;top:376px">Stornogrund :</div>
<div class="fld" style="left:1014px;top:373px;width:235px;height:19px"></div>

<div class="btn" style="left:1267px;top:254px;width:80px;height:18px;border-radius:4px;border-color:#7a9cbc"><span style="top:2px">Re-Text oben</span></div>
<div class="btn" style="left:1267px;top:278px;width:80px;height:18px;border-radius:4px;border-color:#7a9cbc"><span style="top:2px">Re-Text unten</span></div>
<div class="chk" style="left:1269px;top:304px;width:13px;height:13px;border-color:#555"></div>
<div class="t" style="left:1285px;top:305px;color:#2e5a96">weitere Verfolgung</div>
<div class="btn" style="left:1267px;top:374px;width:138px;height:18px;border-radius:4px;border-color:#7a9cbc"><span style="top:2px">Beschreibung 2 erstellen</span></div>

<div class="hsep" style="left:937px;top:396px;width:594px"></div>
<div class="t dl" style="left:937px;top:404px">Zahlungen :</div>
<div class="t dl" style="left:1145px;top:405px">OP : 5,51 €</div>
<div class="a" style="left:937px;top:420px;width:313px;height:73px;background:#fff;border:1px solid #a0a0a0"></div>
<div class="t" style="left:1043px;top:440px;color:#444">Keine Daten vorhanden</div>
<div class="a" style="left:938px;top:473px;width:311px;height:19px;background:#f0f0f0"></div>
<div class="a" style="left:938px;top:474px;width:17px;height:17px;border:1px solid #c8c8c8;background:#f4f4f4"></div><svg class="a" style="left:938px;top:474px" width="17" height="17"><path d="M4.5 8.5H12.5M8.5 4.5V12.5" stroke="#a8a8a8" stroke-width="1.8" fill="none"/></svg><div class="a" style="left:956px;top:474px;width:17px;height:17px;border:1px solid #c8c8c8;background:#f4f4f4"></div><svg class="a" style="left:956px;top:474px" width="17" height="17"><path d="M4.5 8.5H12.5" stroke="#a8a8a8" stroke-width="1.8" fill="none"/></svg><div class="a" style="left:974px;top:474px;width:17px;height:17px;border:1px solid #c8c8c8;background:#f4f4f4"></div><svg class="a" style="left:974px;top:474px" width="17" height="17"><path d="M4 9L7 12L13 5" stroke="#a8a8a8" stroke-width="1.8" fill="none"/></svg><div class="a" style="left:992px;top:474px;width:17px;height:17px;border:1px solid #c8c8c8;background:#f4f4f4"></div><svg class="a" style="left:992px;top:474px" width="17" height="17"><path d="M5 5L12 12M12 5L5 12" stroke="#a8a8a8" stroke-width="1.8" fill="none"/></svg>
<div class="a" style="left:1060px;top:474px;width:189px;height:17px;background:#fff;border:1px solid #a8a8a8"></div>
<div class="a" style="left:1077px;top:475px;width:55px;height:15px;background:#dadada;border:1px solid #c0c0c0"></div>
<svg class="a" style="left:1066px;top:478px" width="6" height="9"><path d="M5 0.5L1 4.5L5 8.5" stroke="#333" stroke-width="1.4" fill="none"/></svg>
<svg class="a" style="left:1237px;top:478px" width="6" height="9"><path d="M1 0.5L5 4.5L1 8.5" stroke="#333" stroke-width="1.4" fill="none"/></svg>
<div class="a" style="left:1233px;top:475px;width:1px;height:15px;background:#c0c0c0"></div>
<svg class="a" style="left:1100px;top:479px" width="9" height="8"><path d="M1 0V8M4.5 0V8M8 0V8" stroke="#444" stroke-width="1.2"/></svg>

<div class="sep" style="left:1259px;top:405px;height:95px"></div>
<div class="t dl" style="left:1267px;top:425px">Status</div>
<div class="a" style="left:1313px;top:420px;width:218px;height:21px;background:#fff;border:1px solid #a8a8a8"></div>
<svg class="a" style="left:1516px;top:428px" width="9" height="6"><path d="M0.5 0.5L4.5 4.5L8.5 0.5" stroke="#aaa" stroke-width="1.4" fill="none"/></svg>
<div class="t dl" style="left:1267px;top:449px">Meldung</div>
<div class="a" style="left:1313px;top:444px;width:218px;height:49px;background:#fff;border:1px solid #a8a8a8"></div>


<!-- dialog grid -->
<div class="a" style="left:373px;top:504px;width:1169px;height:251px;background:#fff;border-top:1px solid #8c8c8c"></div>
<div class="a" style="left:373px;top:505px;width:840px;height:19px;background:#fafafa"></div>
<div class="a" style="left:384px;top:505px;width:2px;height:19px;background:#e6e6e6"></div>
<div class="a" style="left:419px;top:505px;width:2px;height:19px;background:#e6e6e6"></div><div class="t" style="left:389px;top:508px">Pos</div>
<div class="a" style="left:463px;top:505px;width:2px;height:19px;background:#e6e6e6"></div><div class="t" style="left:424px;top:508px">Tarif</div>
<div class="a" style="left:503px;top:505px;width:2px;height:19px;background:#e6e6e6"></div><div class="t" style="left:468px;top:508px">Grp</div>
<div class="a" style="left:828px;top:505px;width:2px;height:19px;background:#e6e6e6"></div><div class="t" style="left:508px;top:508px">Beschreibung</div>
<div class="a" style="left:876px;top:505px;width:2px;height:19px;background:#e6e6e6"></div><div class="t" style="left:833px;top:508px">genutzt</div>
<div class="a" style="left:932px;top:505px;width:2px;height:19px;background:#e6e6e6"></div><div class="t" style="left:881px;top:508px">berechnet</div>
<div class="a" style="left:985px;top:505px;width:2px;height:19px;background:#e6e6e6"></div><div class="t" style="left:937px;top:508px">Einheit</div>
<div class="a" style="left:1046px;top:505px;width:2px;height:19px;background:#e6e6e6"></div><div class="t" style="left:990px;top:508px">Netto</div>
<div class="a" style="left:1110px;top:505px;width:2px;height:19px;background:#e6e6e6"></div><div class="t" style="left:1051px;top:508px">Brutto</div>
<div class="a" style="left:1143px;top:505px;width:2px;height:19px;background:#e6e6e6"></div><div class="t" style="left:1115px;top:508px">%</div>
<div class="a" style="left:1211px;top:505px;width:2px;height:19px;background:#e6e6e6"></div><div class="t" style="left:1148px;top:508px">Gesamt</div>
<div class="a" style="left:373px;top:524px;width:840px;height:95px;background:#a0a0a0"></div>
<div class="a" style="left:373px;top:524px;width:12px;height:18px;background:#f0f0f0"></div><div class="a" style="left:386px;top:524px;width:34px;height:18px;background:#ffd3d3"></div><div class="t" style="left:386px;top:527px;width:32px;text-align:right;color:#000">1</div><div class="a" style="left:421px;top:524px;width:43px;height:18px;background:#3399ff"></div><div class="t" style="left:423px;top:527px;color:#fff">MAUT</div><div class="a" style="left:465px;top:524px;width:39px;height:18px;background:#3399ff"></div><div class="t" style="left:467px;top:527px;color:#fff">*</div><div class="a" style="left:505px;top:524px;width:324px;height:18px;background:#3399ff"></div><div class="t" style="left:507px;top:527px;color:#fff">Maut vom 15.06.2023 bis 15.06.2023</div><div class="a" style="left:830px;top:524px;width:47px;height:18px;background:#3399ff"></div><div class="t" style="left:830px;top:527px;width:45px;text-align:right;color:#fff">1,00</div><div class="a" style="left:878px;top:524px;width:55px;height:18px;background:#3399ff"></div><div class="t" style="left:878px;top:527px;width:53px;text-align:right;color:#fff">1,00</div><div class="a" style="left:934px;top:524px;width:52px;height:18px;background:#3399ff"></div><div class="t" style="left:936px;top:527px;color:#fff">X</div><div class="a" style="left:987px;top:524px;width:60px;height:18px;background:#3399ff"></div><div class="t" style="left:987px;top:527px;width:58px;text-align:right;color:#fff">0,43 €</div><div class="a" style="left:1048px;top:524px;width:63px;height:18px;background:#3399ff"></div><div class="t" style="left:1048px;top:527px;width:61px;text-align:right;color:#fff">0,51 €</div><div class="a" style="left:1112px;top:524px;width:32px;height:18px;background:#3399ff"></div><div class="a" style="left:1145px;top:524px;width:67px;height:18px;background:#3399ff"></div><div class="t" style="left:1145px;top:527px;width:65px;text-align:right;color:#fff">0,43 €</div>
<div class="a" style="left:373px;top:543px;width:12px;height:18px;background:#f0f0f0"></div><div class="a" style="left:386px;top:543px;width:34px;height:18px;background:#ffd3d3"></div><div class="t" style="left:386px;top:546px;width:32px;text-align:right;color:#000">2</div><div class="a" style="left:421px;top:543px;width:43px;height:18px;background:#ffd3d3"></div><div class="t" style="left:423px;top:546px;color:#000">MAUTG</div><div class="a" style="left:465px;top:543px;width:39px;height:18px;background:#ffd3d3"></div><div class="t" style="left:467px;top:546px;color:#000">*</div><div class="a" style="left:505px;top:543px;width:324px;height:18px;background:#ffd3d3"></div><div class="t" style="left:507px;top:546px;color:#000">Belastung Maut</div><div class="a" style="left:830px;top:543px;width:47px;height:18px;background:#ffd3d3"></div><div class="t" style="left:830px;top:546px;width:45px;text-align:right;color:#000">1,00</div><div class="a" style="left:878px;top:543px;width:55px;height:18px;background:#ffd3d3"></div><div class="t" style="left:878px;top:546px;width:53px;text-align:right;color:#000">1,00</div><div class="a" style="left:934px;top:543px;width:52px;height:18px;background:#ffd3d3"></div><div class="t" style="left:936px;top:546px;color:#000">X</div><div class="a" style="left:987px;top:543px;width:60px;height:18px;background:#ffd3d3"></div><div class="t" style="left:987px;top:546px;width:58px;text-align:right;color:#000">4,20 €</div><div class="a" style="left:1048px;top:543px;width:63px;height:18px;background:#ffd3d3"></div><div class="t" style="left:1048px;top:546px;width:61px;text-align:right;color:#000">5,00 €</div><div class="a" style="left:1112px;top:543px;width:32px;height:18px;background:#ffd3d3"></div><div class="a" style="left:1145px;top:543px;width:67px;height:18px;background:#ffd3d3"></div><div class="t" style="left:1145px;top:546px;width:65px;text-align:right;color:#000">4,20 €</div>
<div class="a" style="left:373px;top:562px;width:12px;height:18px;background:#f0f0f0"></div><div class="a" style="left:386px;top:562px;width:34px;height:18px;background:#ffc3c3"></div><div class="t" style="left:386px;top:565px;width:32px;text-align:right;color:#000">99991</div><div class="a" style="left:421px;top:562px;width:43px;height:18px;background:#ffc3c3"></div><div class="t" style="left:423px;top:565px;color:#000">NS.</div><div class="a" style="left:465px;top:562px;width:39px;height:18px;background:#ffc3c3"></div><div class="a" style="left:505px;top:562px;width:324px;height:18px;background:#ffc3c3"></div><div class="t" style="left:507px;top:565px;color:#000">Nettosumme</div><div class="a" style="left:830px;top:562px;width:47px;height:18px;background:#ffc3c3"></div><div class="a" style="left:878px;top:562px;width:55px;height:18px;background:#ffc3c3"></div><div class="a" style="left:934px;top:562px;width:52px;height:18px;background:#ffc3c3"></div><div class="a" style="left:987px;top:562px;width:60px;height:18px;background:#ffc3c3"></div><div class="a" style="left:1048px;top:562px;width:63px;height:18px;background:#ffc3c3"></div><div class="a" style="left:1112px;top:562px;width:32px;height:18px;background:#ffc3c3"></div><div class="a" style="left:1145px;top:562px;width:67px;height:18px;background:#ffc3c3"></div><div class="t" style="left:1145px;top:565px;width:65px;text-align:right;color:#000">4,63 €</div>
<div class="a" style="left:373px;top:581px;width:12px;height:18px;background:#f0f0f0"></div><div class="a" style="left:386px;top:581px;width:34px;height:18px;background:#ffd3d3"></div><div class="t" style="left:386px;top:584px;width:32px;text-align:right;color:#000">99992</div><div class="a" style="left:421px;top:581px;width:43px;height:18px;background:#ffd3d3"></div><div class="t" style="left:423px;top:584px;color:#000">USt.</div><div class="a" style="left:465px;top:581px;width:39px;height:18px;background:#ffd3d3"></div><div class="a" style="left:505px;top:581px;width:324px;height:18px;background:#ffd3d3"></div><div class="t" style="left:507px;top:584px;color:#000">Umsatzsteuer  19 %</div><div class="a" style="left:830px;top:581px;width:47px;height:18px;background:#ffd3d3"></div><div class="a" style="left:878px;top:581px;width:55px;height:18px;background:#ffd3d3"></div><div class="a" style="left:934px;top:581px;width:52px;height:18px;background:#ffd3d3"></div><div class="a" style="left:987px;top:581px;width:60px;height:18px;background:#ffd3d3"></div><div class="t" style="left:987px;top:584px;width:58px;text-align:right;color:#000">4,63 €</div><div class="a" style="left:1048px;top:581px;width:63px;height:18px;background:#ffd3d3"></div><div class="a" style="left:1112px;top:581px;width:32px;height:18px;background:#ffd3d3"></div><div class="t" style="left:1112px;top:584px;width:30px;text-align:right;color:#000">19,00</div><div class="a" style="left:1145px;top:581px;width:67px;height:18px;background:#ffd3d3"></div><div class="t" style="left:1145px;top:584px;width:65px;text-align:right;color:#000">0,88 €</div>
<div class="a" style="left:373px;top:600px;width:12px;height:18px;background:#f0f0f0"></div><div class="a" style="left:386px;top:600px;width:34px;height:18px;background:#ffc3c3"></div><div class="t" style="left:386px;top:603px;width:32px;text-align:right;color:#000">99993</div><div class="a" style="left:421px;top:600px;width:43px;height:18px;background:#ffc3c3"></div><div class="t" style="left:423px;top:603px;color:#000">ES.</div><div class="a" style="left:465px;top:600px;width:39px;height:18px;background:#ffc3c3"></div><div class="a" style="left:505px;top:600px;width:324px;height:18px;background:#ffc3c3"></div><div class="t" style="left:507px;top:603px;color:#000">Endsumme</div><div class="a" style="left:830px;top:600px;width:47px;height:18px;background:#ffc3c3"></div><div class="a" style="left:878px;top:600px;width:55px;height:18px;background:#ffc3c3"></div><div class="a" style="left:934px;top:600px;width:52px;height:18px;background:#ffc3c3"></div><div class="a" style="left:987px;top:600px;width:60px;height:18px;background:#ffc3c3"></div><div class="a" style="left:1048px;top:600px;width:63px;height:18px;background:#ffc3c3"></div><div class="a" style="left:1112px;top:600px;width:32px;height:18px;background:#ffc3c3"></div><div class="a" style="left:1145px;top:600px;width:67px;height:18px;background:#ffc3c3"></div><div class="t" style="left:1145px;top:603px;width:65px;text-align:right;color:#000">5,51 €</div>
<svg class="a" style="left:377px;top:529px" width="6" height="9"><path d="M0 0L6 4.5L0 9Z" fill="#000"/></svg>
<!-- scrollbar -->
<div class="a" style="left:1524px;top:505px;width:17px;height:250px;background:#fff;border-left:1px solid #a0a0a0"></div>
<div class="a" style="left:1525px;top:522px;width:16px;height:168px;background:#dcdcdc;border:1px solid #9a9a9a"></div>
<svg class="a" style="left:1528px;top:510px" width="10" height="6"><path d="M1 5L5 1L9 5" stroke="#333" stroke-width="1.4" fill="none"/></svg>
<svg class="a" style="left:1528px;top:602px" width="9" height="7"><path d="M0 0.5H9M0 3.5H9M0 6.5H9" stroke="#555" stroke-width="1.2"/></svg>

</body></html>
